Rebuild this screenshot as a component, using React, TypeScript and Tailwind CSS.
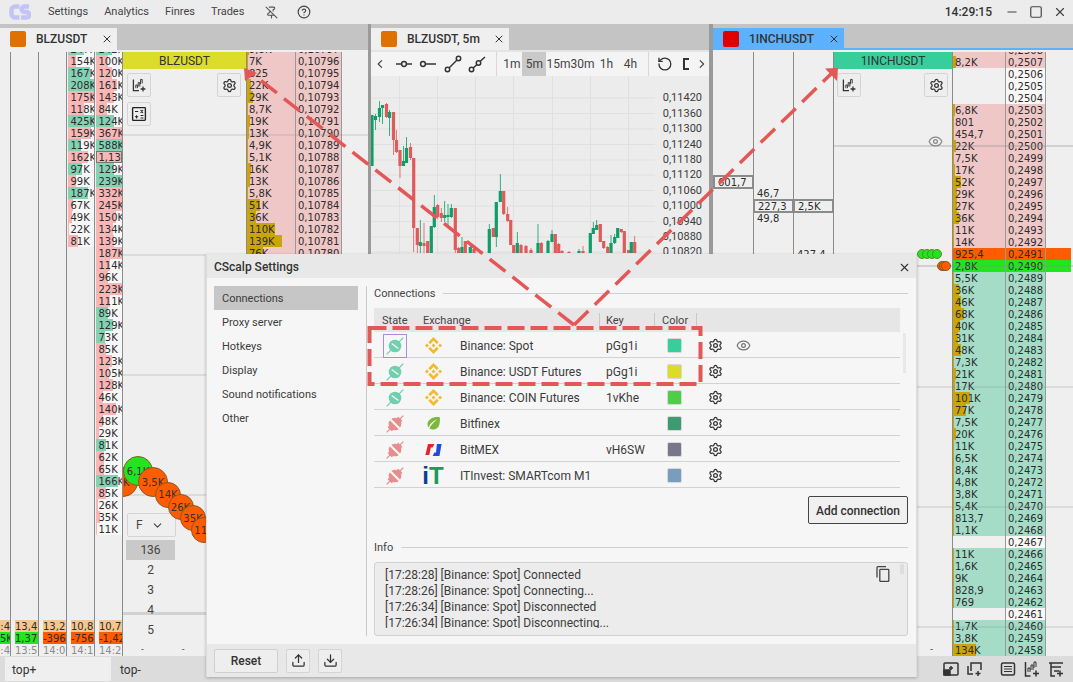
import React from 'react';
import { Settings, PinOff, CircleHelp, Minus, Square, X, Eye, ChevronLeft, ChevronRight, ChevronDown, RotateCcw, Upload, Download } from 'lucide-react';
import { SiBinance } from 'react-icons/si';

const PINK = '#f8b6b6';
const TEAL = '#84d2b4';
type Bar = [string, number, string];
const p = (t: string, n: number): Bar => [t, n, PINK];
const g = (t: string, n: number): Bar => [t, n, TEAL];

const colA: Bar[] = [g('247K', 60), p('154K', 30), g('167K', 85), g('208K', 100), p('175K', 100), p('118K', 60), g('425K', 100), p('159K', 90), g('119K', 50), p('162K', 75), g('97K', 55), p('99K', 30), g('187K', 75), p('67K', 20), p('49K', 15), p('22K', 5), p('81K', 40)];
const colB: Bar[] = [g('242K', 60), p('100K', 45), p('120K', 60), p('161K', 80), p('143K', 70), p('84K', 42), g('124K', 70), p('367K', 100), g('588K', 100), p('1,13', 100), g('129K', 70), g('239K', 100), p('332K', 100), p('245K', 100), p('150K', 75), p('134K', 65), p('139K', 70), p('187K', 100), p('114K', 55), p('96K', 48), p('223K', 100), p('111K', 55), g('89K', 45), g('129K', 65), g('73K', 35), p('85K', 40), p('123K', 60), p('105K', 50), p('128K', 65), p('46K', 25), p('140K', 75), p('48K', 25), p('29K', 10), g('81K', 40), p('62K', 30), p('65K', 30), g('166K', 85), p('85K', 40), p('26K', 8), p('35K', 15), p('11K', 5)];

const leftLadder: [string, number][] = [['9,8K', 2], ['7K', 1], ['825', 1], ['22K', 4], ['29K', 6], ['8,7K', 1], ['19K', 3], ['13K', 2], ['4,9K', 1], ['5,1K', 1], ['16K', 4], ['13K', 3], ['5,8K', 1], ['51K', 13], ['36K', 9], ['110K', 28], ['139K', 35], ['76K', 16]];

const rightLadder: [string, number][] = [['', 0], ['8,2K', 3], ['', 0], ['', 0], ['', 0], ['6,8K', 2], ['801', 1], ['454,7', 1], ['22K', 3], ['7,5K', 1], ['17K', 2], ['52K', 8], ['29K', 4], ['27K', 4], ['36K', 6], ['11K', 1], ['14K', 1], ['925,4', 0], ['2,8K', 0], ['5,5K', 1], ['36K', 6], ['46K', 8], ['68K', 11], ['40K', 7], ['31K', 5], ['48K', 8], ['7,3K', 1], ['21K', 3], ['17K', 2], ['101K', 17], ['77K', 13], ['7,5K', 1], ['20K', 3], ['11K', 1], ['6,5K', 1], ['8,4K', 1], ['4,8K', 1], ['3,8K', 1], ['5,4K', 1], ['813,7', 1], ['1,1K', 1], ['', 0], ['11K', 1], ['1,6K', 1], ['9K', 1], ['828,9', 1], ['769', 1], ['', 0], ['1,7K', 1], ['3,8K', 1], ['134K', 23]];

const prices = ['0,11420', '0,11360', '0,11300', '0,11240', '0,11180', '0,11120', '0,11060', '0,11000', '0,10940', '0,10880', '0,10820'];

// x, wickTop, wickBottom, bodyTop, bodyBottom, up
const candles: [number, number, number, number, number, number][] = [
  [372, 115, 166, 115, 166, 1], [375.5, 114, 130, 116, 120, 1], [379.5, 101, 122, 108, 117, 1], [382.5, 105, 124, 105, 108, 1], [386.5, 103, 118, 104, 117, 0], [389.5, 110, 136, 112, 118, 1], [393.5, 112, 155, 112, 140, 0], [396.5, 130, 153, 140, 152, 0], [400, 150, 178, 150, 166, 0], [403.5, 146, 166, 161, 166, 1], [406.5, 137, 163, 148, 163, 1], [410.5, 143, 160, 147, 158, 0], [413.7, 158, 252, 158, 228, 0],
  [417.3, 228, 253, 228, 245, 0], [420.3, 220, 253, 242, 246, 1], [424, 223, 253, 243, 246, 0], [427.7, 241, 253, 241, 253, 0], [431.3, 226, 253, 226, 253, 1], [434.3, 195, 228, 207, 227, 1], [437.7, 204, 219, 205, 217, 0], [441.3, 208, 222, 213, 218, 0], [444.7, 201, 222, 215, 218, 1], [448, 204, 225, 215, 217, 1], [451.3, 204, 218, 208, 217, 1], [455.3, 208, 253, 208, 250, 0], [458.7, 247, 253, 248, 253, 0], [462, 237, 253, 247, 253, 1], [465.3, 241, 253, 241, 253, 0], [470.3, 245, 253, 247, 253, 1], [474, 248, 253, 249, 253, 0],
  [489.3, 224, 253, 229, 253, 1], [493.3, 228, 237, 228, 237, 0], [496.3, 202, 247, 202, 237, 1], [500.3, 174, 202, 191, 202, 1], [503.7, 191, 215, 191, 214, 0], [507.7, 207, 222, 214, 221, 0], [510.7, 220, 245, 220, 245, 0], [513.7, 245, 253, 245, 253, 0], [517.3, 232, 253, 243, 253, 1], [521, 244, 253, 245, 253, 0], [526, 245, 253, 246, 253, 0], [531, 248, 253, 250, 253, 0],
  [538, 224, 253, 243, 253, 1], [541.3, 242, 253, 243, 253, 0], [548, 240, 253, 241, 253, 1], [552, 230, 242, 234, 242, 1], [555.3, 234, 253, 234, 253, 0], [558.7, 243, 253, 244, 253, 0], [562, 250, 253, 251, 253, 0], [569, 251, 253, 252, 253, 0], [579, 249, 253, 251, 253, 1], [583, 246, 253, 251, 253, 0],
  [590.3, 233, 253, 233, 253, 1], [593.3, 222, 234, 228, 234, 1], [596.7, 220, 230, 225, 230, 1], [600.3, 224, 242, 224, 242, 0], [603.7, 241, 249, 241, 248, 0], [607.7, 246, 253, 247, 253, 0], [611, 235, 253, 243, 253, 1], [614.7, 234, 244, 237, 243, 1], [617.7, 228, 238, 228, 238, 1], [621.3, 229, 233, 229, 232, 0], [624.3, 231, 253, 231, 253, 0], [628.7, 250, 253, 250, 253, 0], [631.3, 242, 253, 242, 253, 1], [634.7, 236, 253, 242, 253, 0],
];

function Cell({ bar }: { bar: Bar }) {
  return (
    <div
      className="h-3 w-full shrink-0 overflow-hidden whitespace-nowrap pl-[3px] leading-[14px]"
      style={{ background: `linear-gradient(90deg, ${bar[2]} ${bar[1]}%, #f7f7f7 ${bar[1]}%)` }}
    >
      {bar[0]}
    </div>
  );
}

function BarColumn({ bars, footer }: { bars: Bar[]; footer: [string, string, string] }) {
  return (
    <div className="flex h-full w-[28px] shrink-0 flex-col border-r border-[#8b8b8b]">
      <div className="min-h-0 flex-1 overflow-hidden pl-[0.5px]">
        <div className="-mt-[9px]">
          {bars.map((b, i) => (
            <div key={i} className={b[0] === '1,13' ? 'h-3 outline outline-1 -outline-offset-1 outline-[#777]' : 'h-3'}>
              <Cell bar={b} />
            </div>
          ))}
        </div>
      </div>
      <Footer vals={footer} />
    </div>
  );
}

function Footer({ vals, right }: { vals: [string, string, string]; right?: boolean }) {
  const isGreen = vals[1].startsWith('1,37') || vals[1] === '5K';
  return (
    <div className={`shrink-0 ${right ? 'text-right' : 'pl-[4px]'}`}>
      <div className="h-3 overflow-hidden whitespace-nowrap bg-[#f6c68f] leading-[14px]">{vals[0]}</div>
      <div className={`h-3 overflow-hidden whitespace-nowrap leading-[14px] ${isGreen ? 'bg-[#22e51f]' : 'bg-[#ff5c00]'}`}>{vals[1]}</div>
      <div className="h-3 overflow-hidden whitespace-nowrap leading-[14px] text-[#8c8c8c]">{vals[2]}</div>
    </div>
  );
}

function IconBtn({ children, className = '' }: { children: React.ReactNode; className?: string }) {
  return <div className={`flex h-6 w-6 items-center justify-center rounded-[2px] border border-[#d4d4d4] bg-[#eeeeee] text-[#333] ${className}`}>{children}</div>;
}

function ChartAdd() {
  return (
    <svg viewBox="0 0 20 20" className="h-4 w-4" fill="none" stroke="#333" strokeWidth="1.6">
      <path d="M3 3v14h7" />
      <path d="M6 14v-4h2v4M9 12V7h2v5M12 9V3h2v5" strokeWidth="1.2" />
      <path d="M15 12v6M12 15h6" />
    </svg>
  );
}
function Calc() {
  return (
    <svg viewBox="0 0 20 20" className="h-4 w-4" fill="none" stroke="#222" strokeWidth="1.7">
      <rect x="2" y="2" width="16" height="16" rx="1" />
      <path d="M5 7h4M12 5l3 3.5M15 5l-3 3.5M5 13.5h4M7 11.5v4M12 12h3.5M12 15h3.5" strokeWidth="1.3" />
    </svg>
  );
}

function LeftLadder() {
  return (
    <div className="h-full w-[123px] shrink-0 overflow-hidden">
      <div className="-mt-[9px] flex flex-col">
        {leftLadder.map(([t, n], i) => (
          <div key={i} className="flex h-3 shrink-0">
            <div className="h-3 w-[49px] shrink-0 overflow-hidden border-l border-[#8b8b8b] pl-[2px] leading-[14px]" style={{ background: `linear-gradient(90deg, #c9a50a ${n}px, #efc7c7 ${n}px)` }}>{t}</div>
            <div className="h-3 w-[47px] shrink-0 overflow-hidden border-x border-[#9a9a9a] bg-[#efc7c7] pl-[2px] leading-[14px]">{`0,10${797 - i}`}</div>
          </div>
        ))}
      </div>
    </div>
  );
}

function RightLadder() {
  return (
    <div className="h-full w-[121px] shrink-0 overflow-hidden">
      <div className="-mt-[8px] flex flex-col">
        {rightLadder.map(([t, n], i) => {
          const price = `0,${2508 - i}`;
          const orange = price === '0,2491';
          const green = price === '0,2490';
          const empty = t === '' && i > 0;
          const pink = i < 17 && !empty;
          const base = orange ? '#ff5c00' : green ? '#22e51f' : empty ? '#f0f0f0' : pink ? '#efc7c7' : '#a4dcc7';
          const pbg = orange ? 'bg-[#ff5c00]' : green ? 'bg-[#22e51f]' : empty ? 'bg-[#f8f8f8]' : pink ? 'bg-[#efc7c7]' : 'bg-[#a4dcc7]';
          const rest = orange ? 'bg-[#ff5c00]' : green ? 'bg-[#22e51f]' : '';
          return (
            <div key={i} className="flex h-3 shrink-0">
              <div className="h-3 w-[53px] shrink-0 overflow-hidden border-l border-[#8b8b8b] pl-[2px] leading-[14px]" style={{ background: `linear-gradient(90deg, #c9a50a ${n}px, ${base} ${n}px)` }}>{t}</div>
              <div className={`h-3 w-[41px] shrink-0 overflow-hidden border-x border-[#9a9a9a] pl-[2px] leading-[14px] ${pbg}`}>{price}</div>
              <div className={`mr-[2px] h-3 flex-1 ${rest}`} />
            </div>
          );
        })}
      </div>
    </div>
  );
}

function Tab({ color, label, active, width }: { color: string; label: string; active?: boolean; width: string }) {
  return (
    <div className={`flex h-[22px] items-center pl-[10px] ${width} ${active ? 'bg-[#5cb2ff]' : 'bg-[#efefef]'}`}>
      <div className="h-4 w-4 shrink-0 rounded-[2px]" style={{ background: color }} />
      <span className="ml-[10px] text-[12px] font-medium text-[#333]">{label}</span>
      <X size={12} className="ml-auto mr-[4px] text-[#333]" />
    </div>
  );
}

function Chip({ x, y, r, t, c }: { x: number; y: number; r: number; t: string; c: string }) {
  return (
    <div
      className="absolute flex items-center justify-center overflow-hidden whitespace-nowrap rounded-full border border-[#8a5a20] font-['DejaVu_Sans',sans-serif] text-[10px] text-[#333]"
      style={{ left: x - r, top: y - r, width: r * 2, height: r * 2, background: c }}
    >
      {t}
    </div>
  );
}

function StateIcon({ on }: { on: boolean }) {
  const c = on ? '#6fcfae' : '#e78d8d';
  return (
    <svg viewBox="0 0 24 24" className="h-5 w-5">
      <line x1="2" y1="22" x2="22" y2="2" stroke={c} strokeWidth="1.5" />
      <circle cx="12" cy="12" r="7.6" fill={c} />
      {on ? (
        <line x1="8" y1="9" x2="16" y2="15" stroke="#f7f7f7" strokeWidth="1.6" />
      ) : (
        <>
          <line x1="5" y1="5" x2="19" y2="19" stroke="#f7f7f7" strokeWidth="2.6" />
          <path d="M15 4l5 5M4 15l5 5" stroke={c} strokeWidth="2.4" />
        </>
      )}
    </svg>
  );
}

function Leaf() {
  return (
    <svg viewBox="0 0 20 20" className="h-[15px] w-[15px]">
      <path d="M18.5 1.5C10 0.5 2 4 2 11c0 2 .8 3.4 1.6 4.4C5 10 10 6 15 4.5 11 7.5 6.5 11.5 4.5 16.5c5 3.2 12 1 13.5-6 .6-3 .6-6 .5-9z" fill="#7fb93c" />
    </svg>
  );
}
function Bitmex() {
  return (
    <svg viewBox="0 0 20 16" className="h-[14px] w-[17px]">
      <polygon points="3.5,1 11,1 9,5 6.8,5 5,14 0.5,14" fill="#e8202a" />
      <polygon points="14,1 19.5,1 17,15 9,15 11,11 13,11" fill="#1f4bd8" />
    </svg>
  );
}

const rows = [
  { on: true, logo: <SiBinance size={17} color="#f3ba2f" />, name: 'Binance: Spot', key: 'pGg1i', color: '#35cf9c', sel: true, eye: true },
  { on: true, logo: <SiBinance size={17} color="#f3ba2f" />, name: 'Binance: USDT Futures', key: 'pGg1i', color: '#dcdc24' },
  { on: true, logo: <SiBinance size={17} color="#f3ba2f" />, name: 'Binance: COIN Futures', key: '1vKhe', color: '#4dce45' },
  { on: false, logo: <Leaf />, name: 'Bitfinex', key: '', color: '#3f9a72' },
  { on: false, logo: <Bitmex />, name: 'BitMEX', key: 'vH6SW', color: '#78768a' },
  { on: false, logo: <span className="font-['Liberation_Sans',sans-serif] text-[24px] font-bold leading-none"><span className="text-[#0b3f8f]">i</span><span className="text-[#1d9a57]">T</span></span>, name: 'ITInvest: SMARTcom M1', key: '', color: '#7a9dbf' },
];

function SectionLabel({ text }: { text: string }) {
  return (
    <div className="flex h-[14px] items-center gap-2">
      <span className="pt-[2px] text-[11px] text-[#444]">{text}</span>
      <div className="h-px flex-1 bg-[#cfcfcf]" />
    </div>
  );
}

function Dialog() {
  return (
    <div className="absolute left-[206px] top-[254px] flex h-[423px] w-[711px] flex-col border-x border-[#dddddd] bg-[#f6f6f6] font-['Roboto',sans-serif] text-[#3c3c3c] shadow-[0_1px_3px_rgba(0,0,0,0.25)]">
      <div className="flex h-[24px] shrink-0 items-center justify-between bg-[#e8e8e8] pl-[7px] pr-[5px] pt-[2px] text-[12px] font-medium text-[#333]">
        <span>CScalp Settings</span>
        <X size={13} className="text-[#333]" />
      </div>
      <div className="flex min-h-0 flex-1 pb-[8px] pt-[8px]">
        <div className="w-[159px] shrink-0 pl-[7px] text-[11px]">
          {['Connections', 'Proxy server', 'Hotkeys', 'Display', 'Sound notifications', 'Other'].map((t, i) => (
            <div key={t} className={`flex h-6 w-[144px] items-center pl-[8px] pt-[2px] ${i === 0 ? 'bg-[#c6c6c6]' : ''}`}>{t}</div>
          ))}
        </div>
        <div className="relative flex min-w-0 flex-1 flex-col border-l border-[#c9c9c9] pl-[7px] pr-[8px]">
          <SectionLabel text="Connections" />
          <div className="mt-[8px] w-[526px]">
            <div className="flex h-6 items-end bg-[#e6e6e6] pb-[3px] text-[11px] text-[#444]">
              <span className="w-[49px] pl-[8px]">State</span>
              <span className="w-[177px] border-r border-[#c8c8c8] pl-0">Exchange</span>
              <span className="w-[55px] border-r border-[#c8c8c8] pl-[6px]">Key</span>
              <span className="w-[42px] border-r border-[#c8c8c8] pl-[7px]">Color</span>
            </div>
            {rows.map((r) => (
              <div key={r.name} className="flex h-[26px] items-center border-b border-[#d2d2d2] pt-[2px] text-[12px]">
                <div className="flex w-[42px] shrink-0 justify-center">
                  <div className={`flex h-6 w-6 items-center justify-center ${r.sel ? 'border border-[#a68fd8]' : ''}`}>
                    <StateIcon on={r.on} />
                  </div>
                </div>
                <div className="flex w-[34px] shrink-0 justify-center">{r.logo}</div>
                <div className="ml-[10px] w-[146px] shrink-0 whitespace-nowrap">{r.name}</div>
                <div className="w-[61px] shrink-0">{r.key}</div>
                <div className="h-[15px] w-[15px] shrink-0 rounded-[2px] border border-[#d8d8d8]" style={{ background: r.color }} />
                <Settings size={15} className="ml-[26px] shrink-0 text-[#333]" />
                {r.eye && <Eye size={15} className="ml-[13px] shrink-0 text-[#777]" />}
              </div>
            ))}
          </div>
          <div className="absolute left-[536px] top-[47px] h-[40px] w-[3px] bg-[#e8e8e8]" />
          <div className="mt-[8px] flex justify-end">
            <div className="flex h-[28px] w-[100px] items-center justify-center rounded-[2px] border border-[#444] bg-[#f0f0f0] pt-[2px] text-[12px] font-medium text-[#333]">Add connection</div>
          </div>
          <div className="mt-[16px]"><SectionLabel text="Info" /></div>
          <div className="relative mt-[8px] h-[74px] shrink-0 rounded-[3px] border border-[#d2d2d2] bg-[#ececec] pl-[10px] pt-[4px] text-[12px] leading-4">
            <div className="h-[61px] overflow-hidden">
              <div>[17:28:28] [Binance: Spot] Connected</div>
              <div>[17:28:26] [Binance: Spot] Connecting...</div>
              <div>[17:26:34] [Binance: Spot] Disconnected</div>
              <div>[17:26:34] [Binance: Spot] Disconnecting...</div>
            </div>
            <svg viewBox="0 0 14 16" className="absolute right-[17px] top-[3px] h-[16px] w-[14px]" fill="none" stroke="#444" strokeWidth="1.3">
              <path d="M1 11.5V1.5a.8.8 0 0 1 .8-.8H10" />
              <rect x="3.8" y="3.4" width="9" height="12" rx="0.8" />
            </svg>
            <div className="absolute right-[3px] top-[1px] h-[10px] w-[4px] bg-[#dedede]" />
          </div>
        </div>
      </div>
      <div className="flex h-[33px] shrink-0 items-center gap-2 bg-[#e8e8e8] pl-[7px]">
        <div className="flex h-6 w-[64px] items-center justify-center rounded-[2px] border border-[#cfcfcf] bg-[#eeeeee] text-[12px] font-medium text-[#333]">Reset</div>
        <IconBtn><Upload size={15} /></IconBtn>
        <IconBtn><Download size={15} /></IconBtn>
      </div>
    </div>
  );
}

function Arrows() {
  const c = '#e45757';
  return (
    <svg className="pointer-events-none absolute inset-0 h-full w-full" viewBox="0 0 1073 682" fill="none">
      <rect x="369.5" y="328" width="331" height="56" stroke={c} strokeWidth="4" strokeDasharray="17 6" />
      <path d="M574 325L250 72" stroke={c} strokeWidth="3.5" strokeDasharray="20 9" />
      <path d="M574 325L833 72" stroke={c} strokeWidth="3.5" strokeDasharray="20 9" />
      <polygon points="244,68 257,73 245,81" fill={c} />
      <polygon points="838,68 825,68.5 837,81" fill={c} />
    </svg>
  );
}

function LineTool({ kind }: { kind: number }) {
  return (
    <svg viewBox="0 0 18 18" className="h-[18px] w-[18px]" fill="none" stroke="#333" strokeWidth="1.5">
      {kind === 0 && <><path d="M1 9h5M12 9h5" /><circle cx="9" cy="9" r="2.4" /></>}
      {kind === 1 && <><circle cx="4" cy="9" r="2.4" /><path d="M6.5 9H17" /></>}
      {kind === 2 && <><circle cx="3.5" cy="14.5" r="2.2" /><circle cx="14.5" cy="3.5" r="2.2" /><path d="M5 13L13 5" /></>}
      {kind === 3 && <><circle cx="3.5" cy="14.5" r="2.2" /><circle cx="10.5" cy="8" r="2.2" /><path d="M5.2 13L9 9.5M12 6.5L17 2" /></>}
    </svg>
  );
}

function BottomIcons() {
  const s = { fill: 'none', stroke: '#333', strokeWidth: 1.5 };
  return (
    <div className="ml-auto flex h-full items-center pr-[9px]">
      <svg viewBox="0 0 16 16" className="h-4 w-4" {...s}><rect x="1" y="2" width="14" height="12" rx="1" /><rect x="1" y="9" width="6" height="5" fill="#333" /><path d="M8 5v4M6 7h4" /></svg>
      <svg viewBox="0 0 16 16" className="ml-2 h-4 w-4" {...s}><path d="M4 10V2h10v7M6 13H1V5" /><path d="M11 10v5M8.5 12.5h5" /></svg>
      <svg viewBox="0 0 16 16" className="ml-[17px] h-4 w-4" {...s}><rect x="1.5" y="2" width="13" height="12" rx="1.5" /><path d="M4 5.5h8M4 8h8M4 10.5h8" strokeWidth="1.1" /></svg>
      <svg viewBox="0 0 16 16" className="ml-2 h-4 w-4" {...s}><path d="M1.5 1v14h5" /><path d="M4 11V7h2v4M7 9V4h2v5M10 7V1h2v5" strokeWidth="1" /><path d="M12 9.5v6M9 12.5h6" /></svg>
      <svg viewBox="0 0 16 16" className="ml-2 h-4 w-4" {...s}><path d="M1 2h14M3 6h10M3 2v13h4M6 10h5" /><path d="M12 9.5v6M9 12.5h6" /></svg>
    </div>
  );
}

export default function App() {
  return (
    <div className="relative flex h-[682px] w-[1073px] flex-col overflow-hidden bg-[#e4e4e4] font-['Roboto',sans-serif] text-[#333]">
      <header className="flex h-6 shrink-0 items-center bg-[#ececec] text-[11px] text-[#444]">
        <svg viewBox="0 0 22 16" className="ml-[9px] h-4 w-[22px]" fill="none" stroke="#c3c3f6" strokeWidth="4.6">
          <path d="M10.5 2.5H6A3.5 3.5 0 0 0 2.5 6v4A3.5 3.5 0 0 0 6 13.5h4.5" />
          <path d="M20 2.5H15.5a2.7 2.7 0 0 0 0 5.5h2a2.7 2.7 0 0 1 0 5.5H12" />
        </svg>
        <span className="ml-[17px]">Settings</span>
        <span className="ml-[16px]">Analytics</span>
        <span className="ml-[16px]">Finres</span>
        <span className="ml-[16px]">Trades</span>
        <PinOff size={13} className="ml-[21px] text-[#555]" />
        <CircleHelp size={14} className="ml-[19px] text-[#444]" />
        <span className="ml-auto text-[12px] font-medium text-[#333]">14:29:15</span>
        <Minus size={14} className="ml-[13px] text-[#444]" />
        <Square size={14} className="ml-[10px] text-[#444]" />
        <X size={14} className="ml-[10px] mr-[6px] text-[#444]" />
      </header>

      <main className="flex min-h-0 flex-1 font-['DejaVu_Sans',sans-serif] text-[10px] text-[#2c2c2c]">
        {/* Left pane */}
        <section className="flex h-full w-[368px] shrink-0 flex-col">
          <div className="h-[26px] shrink-0 bg-[#c4c4c4] pt-[4px] font-['Roboto',sans-serif]">
            <Tab color="#e07000" label="BLZUSDT" width="w-[117px]" />
          </div>
          <div className="relative flex min-h-0 flex-1 bg-[#efefef] pt-[2px]">
            <div className="flex h-full w-[11px] shrink-0 flex-col border-r border-[#8b8b8b]">
              <div className="flex-1" />
              <Footer vals={[':4', '5K', ':4']} right />
            </div>
            <div className="flex h-full w-[28px] shrink-0 flex-col border-r border-[#8b8b8b]"><div className="flex-1" /><Footer vals={['13,4', '1,37', '13:5']} /></div>
            <div className="flex h-full w-[28px] shrink-0 flex-col border-r border-[#8b8b8b]"><div className="flex-1" /><Footer vals={['13,2', '-396', '14:0']} /></div>
            <BarColumn bars={colA} footer={['10,8', '-756', '14:1']} />
            <BarColumn bars={colB} footer={['10,7', '-1,42', '14:2']} />
            <div className="relative flex h-full w-[123px] shrink-0 flex-col font-['Roboto',sans-serif]">
              <div className="flex h-[17px] shrink-0 items-center justify-center bg-[#dcdc2a] text-[12px] text-[#333]">BLZUSDT</div>
              <div className="mt-[4px] flex justify-between pl-[4px] pr-[5px]">
                <IconBtn><ChartAdd /></IconBtn>
                <IconBtn><Settings size={15} /></IconBtn>
              </div>
              <IconBtn className="ml-[4px] mt-[5px]"><Calc /></IconBtn>
              <div className="mt-auto ml-[4px] flex h-6 w-[49px] items-center justify-between rounded-[2px] border border-[#d4d4d4] pl-[8px] pr-[11px] text-[12px] text-[#444]">
                F<ChevronDown size={13} />
              </div>
              <div className="ml-[3px] mt-[3px] w-[49px] text-center text-[12px] text-[#444]">
                <div className="flex h-5 items-center justify-center bg-[#c9c9c9]">136</div>
                <div className="flex h-5 items-center justify-center">2</div>
                <div className="flex h-5 items-center justify-center">3</div>
                <div className="flex h-5 items-center justify-center">4</div>
                <div className="flex h-5 items-center justify-center">5</div>
              </div>
              <div className="mt-[4px] flex h-3 pl-[18px] text-[10px] leading-3 text-[#666]"><span>-</span><span className="ml-[38px]">-</span></div>
            </div>
            <LeftLadder />
            <div className="pointer-events-none absolute left-[123px] right-0 top-[84px] h-[2px] bg-[#8a8a8a]/20" />
            <div className="pointer-events-none absolute left-[123px] right-0 top-[204px] h-[2px] bg-[#8a8a8a]/20" />
            <div className="pointer-events-none absolute left-[123px] right-0 top-[324px] h-[2px] bg-[#8a8a8a]/20" />
            <div className="pointer-events-none absolute left-[123px] right-0 top-[444px] h-[2px] bg-[#8a8a8a]/20" />
            <div className="pointer-events-none absolute left-[123px] right-0 top-[562px] h-[3px] bg-[#8a8a8a]/30" />
            <div className="absolute left-[123px] top-[400px] h-[100px] w-[83px] overflow-hidden">
              <Chip x={0} y={32} r={15} t="6K" c="#ff5c00" />
              <Chip x={15} y={21} r={15} t="6,1K" c="#22e51f" />
              <Chip x={30} y={32} r={15} t="3,5K" c="#ff5c00" />
              <Chip x={45} y={44.5} r={13} t="14K" c="#ff5c00" />
              <Chip x={57.5} y={57} r={13} t="26K" c="#ff5c00" />
              <Chip x={70} y={68} r={13} t="35K" c="#ff5c00" />
              <Chip x={81} y={80} r={13} t="11K" c="#ff5c00" />
            </div>
          </div>
        </section>

        <div className="h-full w-[3px] shrink-0 bg-[#9a9a9a]" />

        {/* Center pane */}
        <section className="flex h-full w-[338px] shrink-0 flex-col font-['Roboto',sans-serif]">
          <div className="h-[26px] shrink-0 bg-[#c4c4c4] pt-[4px]">
            <Tab color="#e07000" label="BLZUSDT, 5m" width="w-[138px]" />
          </div>
          <div className="mt-[2px] flex h-6 shrink-0 items-center bg-[#f4f4f4] text-[12px] text-[#444]">
            <ChevronLeft size={14} className="ml-[2px]" />
            <div className="ml-[8px] flex w-[94px] justify-between pr-[1px] text-[#333]">
              <LineTool kind={0} /><LineTool kind={1} /><LineTool kind={2} /><LineTool kind={3} />
            </div>
            <div className="ml-[8px] h-full w-px bg-[#d8d8d8]" />
            <div className="ml-[5px] flex h-full items-center">
              <div className="flex h-full w-[21px] items-center justify-center">1m</div>
              <div className="flex h-full w-[24px] items-center justify-center bg-[#c9c9c9]">5m</div>
              <div className="flex h-full w-[24px] items-center justify-center">15m</div>
              <div className="flex h-full w-[24px] items-center justify-center">30m</div>
              <div className="flex h-full w-[24px] items-center justify-center">1h</div>
              <div className="flex h-full w-[24px] items-center justify-center">4h</div>
            </div>
            <div className="ml-[6px] h-full w-px bg-[#d8d8d8]" />
            <RotateCcw size={16} className="ml-[8px] text-[#333]" />
            <div className="ml-[10px] h-[12px] w-[6px] border-y-2 border-l-2 border-[#333]" />
            <ChevronRight size={14} className="ml-[6px]" />
          </div>
          <div className="relative min-h-0 flex-1 bg-[#ececec]">
            <svg className="absolute left-0 top-0 h-[178px] w-[337px]" viewBox="371 76 337 178">
              {[399.5, 437.5, 475.5, 513.5, 552.5, 590.5, 628.5].map((x) => (
                <line key={x} x1={x} x2={x} y1={76} y2={254} stroke="#e0e0e0" />
              ))}
              {[98, 113.5, 129, 144.5, 160, 175, 190.5, 206, 221.5, 237, 252].map((y) => (
                <line key={y} x1={371} x2={655} y1={y} y2={y} stroke="#e0e0e0" />
              ))}
              {candles.map(([x, wt, wb, bt, bb, up], i) => (
                <g key={i} fill={up ? '#0f9d68' : '#e05a5a'}>
                  <rect x={x - 0.4} y={wt} width={0.8} height={wb - wt} />
                  <rect x={x - 1.6} y={bt} width={3.2} height={Math.max(bb - bt, 1)} />
                </g>
              ))}
            </svg>
            <div className="absolute right-[7px] top-[15px] flex flex-col items-end text-[11px] text-[#3c3c3c]">
              {prices.map((v) => <div key={v} className="flex h-[15.4px] items-center">{v}</div>)}
            </div>
          </div>
        </section>

        <div className="h-full w-[4px] shrink-0 bg-[#9a9a9a]" />

        {/* Right pane */}
        <section className="flex h-full min-w-0 flex-1 flex-col">
          <div className="h-[26px] shrink-0 border-b-2 border-[#5cb2ff] bg-[#c4c4c4] pt-[4px] font-['Roboto',sans-serif]">
            <div className="-mb-[2px]"><Tab color="#e00000" label="1INCHUSDT" active width="w-[131px]" /></div>
          </div>
          <div className="relative flex min-h-0 flex-1 bg-[#efefef] pt-[2px]">
            <div className="h-full w-[41px] shrink-0 border-r border-[#8b8b8b]" />
            <div className="h-full w-[40px] shrink-0 border-r border-[#8b8b8b]" />
            <div className="h-full w-[40px] shrink-0 border-r border-[#8b8b8b]" />
            <div className="relative flex h-full w-[118px] shrink-0 flex-col font-['Roboto',sans-serif]">
              <div className="flex h-[17px] shrink-0 items-center justify-center bg-[#36cf9b] text-[12px] text-[#333]">1INCHUSDT</div>
              <div className="mt-[4px] flex justify-between pl-[3px] pr-[4px]">
                <IconBtn><ChartAdd /></IconBtn>
                <IconBtn><Settings size={15} /></IconBtn>
              </div>
              <Eye size={15} className="absolute left-[94px] top-[82px] text-[#888]" />
              <div className="mt-auto flex h-3 justify-end pr-[19px] text-[10px] leading-3 text-[#555]">-</div>
            </div>
            <RightLadder />
            <div className="pointer-events-none absolute left-[121px] right-0 top-[95px] h-[2px] bg-[#8a8a8a]/30" />
            <div className="pointer-events-none absolute left-[121px] right-0 top-[215px] h-[2px] bg-[#8a8a8a]/30" />
            <div className="pointer-events-none absolute left-[121px] right-0 top-[336px] h-[2px] bg-[#8a8a8a]/20" />
            <div className="pointer-events-none absolute left-[121px] right-0 top-[456px] h-[2px] bg-[#8a8a8a]/20" />
            <div className="pointer-events-none absolute left-[121px] right-0 top-[576px] h-[2px] bg-[#8a8a8a]/20" />
            {/* Footprint cells on the cluster columns */}
            <div className="absolute left-0 top-[125px] flex h-[14px] w-[41px] items-center border-2 border-[#8b8b8b] pl-[3px]">601,7</div>
            <div className="absolute left-[44px] top-[136px]">46,7</div>
            <div className="absolute left-[40px] top-[149px] flex h-[14px] w-[41px] items-center border-2 border-[#8b8b8b] pl-[3px]">227,3</div>
            <div className="absolute left-[80px] top-[149px] flex h-[14px] w-[41px] items-center border-2 border-[#8b8b8b] pl-[3px]">2,5K</div>
            <div className="absolute left-[44px] top-[161px]">49,8</div>
            <div className="absolute left-[84px] top-[197px]">427,4</div>
            <div className="absolute left-[204px] top-[199px] flex">
              {[0, 1, 2, 3].map((i) => <div key={i} className="-mr-[5px] h-[10px] w-[10px] rounded-full border border-[#5a8a20] bg-[#22e51f]" />)}
            </div>
            <div className="absolute left-[224px] top-[211px] flex">
              {[0, 1, 2].map((i) => <div key={i} className="-mr-[8px] h-[10px] w-[10px] rounded-full border border-[#8a5a20] bg-[#ff5c00]" />)}
            </div>
          </div>
        </section>
      </main>

      <footer className="flex h-[26px] shrink-0 items-center bg-[#dcdcdc] pl-[5px] text-[12px] text-[#333]">
        <div className="flex h-[24px] w-[106px] items-center bg-[#efefef] pl-[7px] pt-[2px]">top+</div>
        <div className="ml-px flex h-[24px] w-[94px] items-center bg-[#dcdcdc] pl-[8px] pt-[2px]">top-</div>
        <BottomIcons />
      </footer>

      <Dialog />
      <Arrows />
    </div>
  );
}
